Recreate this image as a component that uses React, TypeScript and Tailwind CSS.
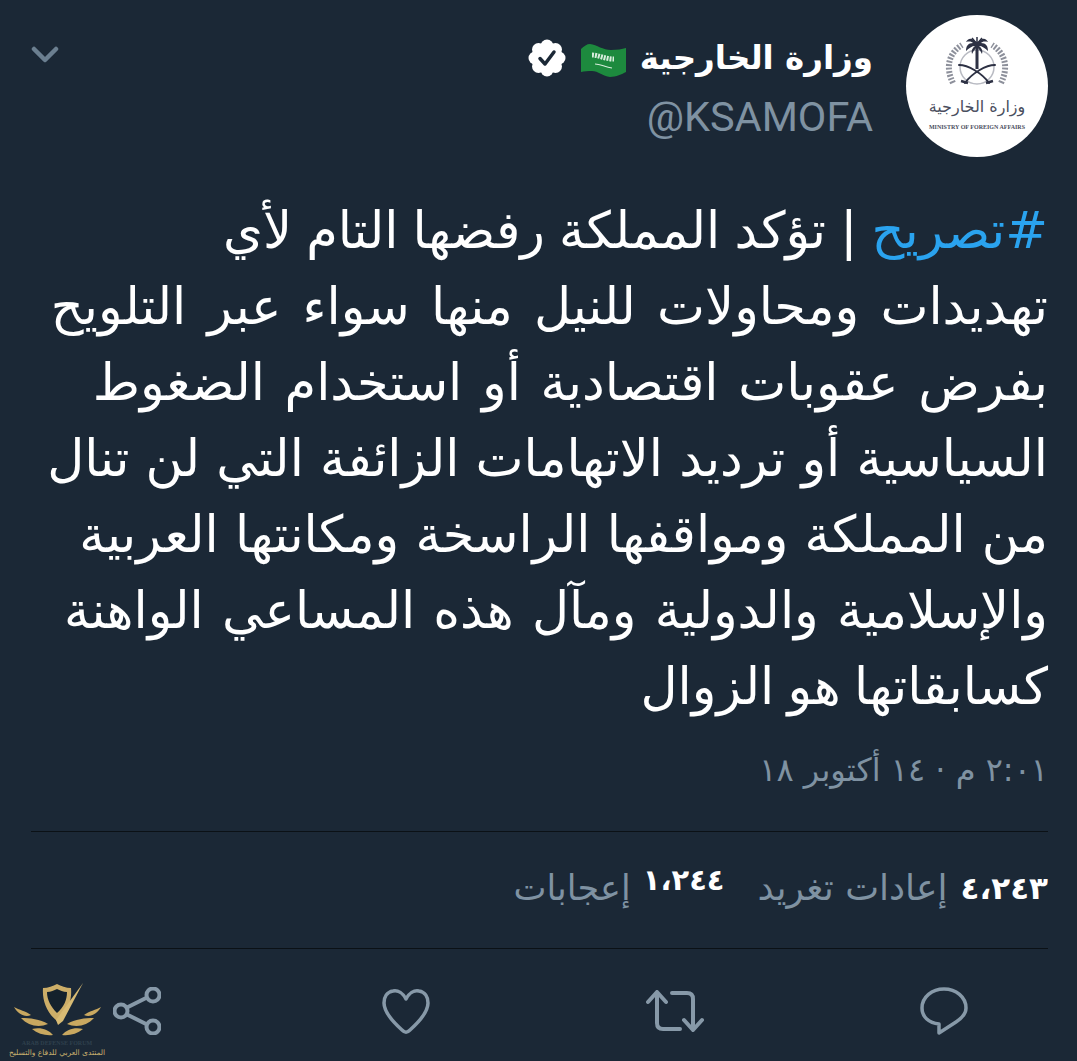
function Emblem() {
  return (
    <svg viewBox="0 0 142 142" className="absolute inset-0 h-full w-full" fill="none">
      {/* wreath and inner ring */}
      <path d="M47 68C39 52 43 38 56 30M95 68C103 52 99 38 86 30" stroke="#8d909b" strokeWidth="6" strokeDasharray="2 1.500" />
      <circle cx="71" cy="52" r="17" stroke="#b9bbc3" strokeWidth="1.500" />
      {/* palm */}
      <path d="M71 28V54" stroke="#2d3144" strokeWidth="3" />
      <path
        d="M71 28C66 22 62 23 60 27C64 26 66 27 67 28C62 28 60 31 60 36C63 33 66 31 69 31C66 33 65 36 66 39C68 35 70 33 71 32C72 33 74 35 76 39C77 36 76 33 73 31C76 31 79 33 82 36C82 31 80 28 75 28C76 27 78 26 82 27C80 23 76 22 71 28Z"
        fill="#2d3144"
      />
      <path d="M71 22V30M66 23L71 29M76 23L71 29" stroke="#2d3144" strokeWidth="1.500" />
      {/* swords */}
      <path d="M53 50C62 50 76 58 83 68M89 50C80 50 66 58 59 68" stroke="#2d3144" strokeWidth="2" strokeLinecap="round" />
      <path d="M55 66L62 68M87 66L80 68" stroke="#2d3144" strokeWidth="2.500" />
    </svg>
  )
}

function Flag() {
  return (
    <svg viewBox="0 0 46 34" className="h-[34px] w-[46px]">
      <path d="M0 5C3 2 6 0 9 0C16 1 22 6 30 6C36 6 41 5 45 4V28C41 30 35 33 29 33C22 32 17 27 11 27C7 27 3 27 0 28Z" fill="#1d8a3e" />
      <path d="M11 11C17 11 24 15 33 15" stroke="#d9eedd" strokeWidth="5" strokeDasharray="2 1" fill="none" />
      <path d="M14 20C19 20 24 23 31 24" stroke="#d9eedd" strokeWidth="1.200" fill="none" />
    </svg>
  )
}

function VerifiedBadge() {
  return (
    <svg viewBox="0 0 38 38" className="h-[38px] w-[38px]">
      <g fill="#ffffff">
        <circle cx="19" cy="19" r="14" />
        <circle cx="19" cy="7" r="6.500" />
        <circle cx="27.500" cy="10.500" r="6.500" />
        <circle cx="31" cy="19" r="6.500" />
        <circle cx="27.500" cy="27.500" r="6.500" />
        <circle cx="19" cy="31" r="6.500" />
        <circle cx="10.500" cy="27.500" r="6.500" />
        <circle cx="7" cy="19" r="6.500" />
        <circle cx="10.500" cy="10.500" r="6.500" />
      </g>
      <path d="M12 19.500L17 25L26 13" stroke="#1b2836" strokeWidth="3.500" fill="none" strokeLinecap="round" strokeLinejoin="round" />
    </svg>
  )
}

function ShareIcon() {
  return (
    <svg viewBox="0 0 48 48" className="h-[48px] w-[48px]" fill="none" stroke="#8799a8" strokeWidth="4">
      <circle cx="40" cy="8" r="6.500" />
      <circle cx="8" cy="24" r="6.500" />
      <circle cx="40" cy="40" r="6.500" />
      <path d="M14 20.500L34 10.500M14 27.500L34 37.500" />
    </svg>
  )
}

function HeartIcon() {
  return (
    <svg viewBox="0 0 48 46" className="h-[46px] w-[48px]" fill="none" stroke="#8799a8" strokeWidth="3.500" strokeLinejoin="round">
      <path d="M24 11C21 5 16 2 11 3C5 4 2 9 2 15C2 24 10 33 20 42C23 45 25 45 28 42C38 33 46 24 46 15C46 9 43 4 37 3C32 2 27 5 24 11Z" />
    </svg>
  )
}

function RetweetIcon() {
  return (
    <svg viewBox="0 0 58 42" className="h-[42px] w-[58px]" fill="none" stroke="#8799a8" strokeWidth="4" strokeLinecap="round" strokeLinejoin="round">
      <path d="M2 12L11 2L20 12M11 3V33Q11 39 17 39H34" />
      <path d="M26 3H41Q47 3 47 9V38M38 30L47 40L56 30" />
    </svg>
  )
}

function ReplyIcon() {
  return (
    <svg viewBox="0 0 48 48" className="h-[48px] w-[48px]" fill="none" stroke="#8799a8" strokeWidth="3.500" strokeLinejoin="round">
      <path d="M24 2C12 2 2 10 2 21C2 30 9 36 19 37V46L36 35C42 31 46 27 46 21C46 10 36 2 24 2Z" />
    </svg>
  )
}

function ForumMark() {
  return (
    <div className="absolute bottom-[3px] left-[8px] flex w-[98px] flex-col items-center">
      <svg viewBox="0 2 95 60" className="h-[60px] w-[95px]">
        <path d="M33 7C38 7 43 5 47 3C51 5 56 7 61 7C62 18 59 30 47 40C37 32 32 20 33 7Z" fill="#cdae68" />
        <path d="M37 11C41 11 44 9 47 8C50 9 53 11 57 11C57 19 54 26 47 32C41 26 37 19 37 11Z" fill="#14212c" />
        <path d="M46 39L73 2L53 40L48 44Z" fill="#d8bb74" />
        <g fill="#c9a860">
          <path d="M4 26C9 29 16 30 21 34C15 37 8 33 4 26Z" />
          <path d="M11 37C20 37 30 38 38 43C29 47 18 45 11 37Z" />
          <path d="M22 48C30 46 38 48 43 54C36 55 28 53 22 48Z" />
        </g>
        <g transform="translate(95 0) scale(-1 1)" fill="#c9a860">
          <path d="M4 26C9 29 16 30 21 34C15 37 8 33 4 26Z" />
          <path d="M11 37C20 37 30 38 38 43C29 47 18 45 11 37Z" />
          <path d="M22 48C30 46 38 48 43 54C36 55 28 53 22 48Z" />
        </g>
      </svg>
      <span className="-mt-[3px] text-[6px] leading-[7px] font-bold whitespace-nowrap text-[#2f404d] font-['Liberation_Serif',serif]">ARAB DEFENSE FORUM</span>
      <span dir="rtl" className="text-[7.500px] leading-[11px] whitespace-nowrap text-[#c9b06e] font-['DejaVu_Sans',sans-serif]">
        المنتدى العربي للدفاع والتسليح
      </span>
    </div>
  )
}

export default function App() {
  return (
    <div dir="rtl" className="relative h-[1061px] w-[1077px] overflow-hidden bg-[#1b2836] pr-[29px] pl-[31px] font-['DejaVu_Sans',sans-serif] text-white">
      {/* header */}
      <div className="flex items-start pt-[15px]">
        <div className="relative h-[142px] w-[142px] shrink-0 overflow-hidden rounded-full bg-white">
          <Emblem />
          <div className="absolute inset-x-0 top-[78px] text-center text-[16px] leading-[28px] text-[#4a4e5e]">وزارة الخارجية</div>
          <div dir="ltr" className="absolute inset-x-0 top-[108px] text-center text-[6px] leading-[8px] font-bold whitespace-nowrap text-[#4a4e5e] font-['Liberation_Serif',serif]">MINISTRY OF FOREIGN AFFAIRS</div>
        </div>
        <div className="mr-[33px] flex flex-col items-start">
          <div className="flex h-[52px] items-center pt-[34px]">
            <span className="ml-[13px] text-[32.500px] leading-[44px] font-bold">وزارة الخارجية</span>
            <div className="mt-[6px] ml-[15px]"><Flag /></div>
            <VerifiedBadge />
          </div>
          <div dir="ltr" className="mt-[28px] text-[41.500px] leading-[44px] text-[#7f92a2] font-['Roboto',sans-serif]">@KSAMOFA</div>
        </div>
        <svg viewBox="0 0 28 17" className="mt-[31px] mr-auto h-[17px] w-[28px]" fill="none" stroke="#6b7f90" strokeWidth="4.500" strokeLinecap="round" strokeLinejoin="round">
          <path d="M3 3L14 14L25 3" />
        </svg>
      </div>

      {/* tweet body */}
      <div className="mt-[36px] text-[51px] leading-[76px] whitespace-nowrap">
        <p className="[word-spacing:-2px]"><span className="text-[#2aa3ef]">#تصريح</span> | تؤكد المملكة رفضها التام لأي</p>
        <p className="[word-spacing:5px]">تهديدات ومحاولات للنيل منها سواء عبر التلويح</p>
        <p className="[word-spacing:3.500px]">بفرض عقوبات اقتصادية أو استخدام الضغوط</p>
        <p>السياسية أو ترديد الاتهامات الزائفة التي لن تنال</p>
        <p>من المملكة ومواقفها الراسخة ومكانتها العربية</p>
        <p className="[word-spacing:2px]">والإسلامية والدولية ومآل هذه المساعي الواهنة</p>
        <p className="[word-spacing:-3px]">كسابقاتها هو الزوال</p>
      </div>

      <div className="mt-[23px] text-[32px] leading-[44px] text-[#7f92a2]">٢:٠١ م · ١٤ أكتوبر ١٨</div>

      {/* stats */}
      <div className="mt-[39px] flex h-[118px] items-center gap-[33px] border-y border-[#0b1116] pb-[4px]">
        <div className="flex items-center gap-[13px]">
          <span className="text-[31px] font-bold">٤،٢٤٣</span>
          <span className="text-[36px] text-[#7f92a2]">إعادات تغريد</span>
        </div>
        <div className="flex items-center gap-[12px]">
          <span className="mb-[14px] text-[29px] font-bold">١،٢٤٤</span>
          <span className="text-[35px] text-[#7f92a2]">إعجابات</span>
        </div>
      </div>

      {/* actions */}
      <div className="flex items-center gap-[216px] pt-[38px] pr-[80px]">
        <ReplyIcon />
        <RetweetIcon />
        <HeartIcon />
        <div className="mr-[5px]"><ShareIcon /></div>
      </div>

      <ForumMark />
    </div>
  )
}
